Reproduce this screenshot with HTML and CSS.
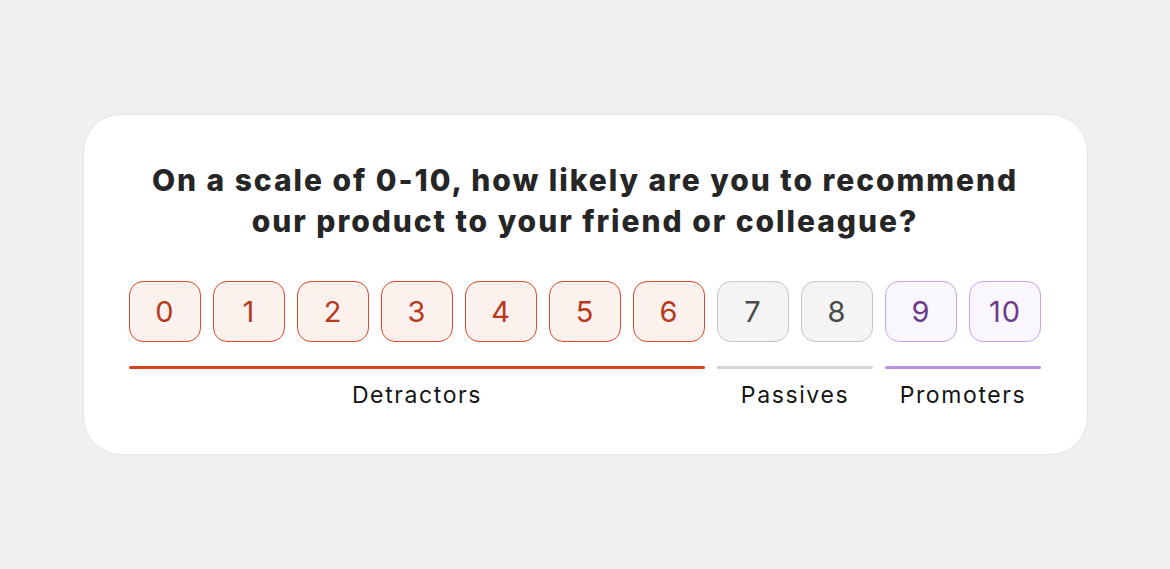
FILE: index.html
```html
<!DOCTYPE html>
<html lang="en">
<head>
<meta charset="utf-8">
<title>NPS survey</title>
<link rel="stylesheet" href="styles.css">
</head>
<body>
<main class="page">
  <section class="card">
    <h1 class="question">On a scale of 0-10, how likely are you to recommend<br>our product to your friend or colleague?</h1>
    <div class="scale">
      <div class="group detractors">
        <div class="buttons">
          <button class="score">0</button>
          <button class="score">1</button>
          <button class="score">2</button>
          <button class="score">3</button>
          <button class="score">4</button>
          <button class="score">5</button>
          <button class="score">6</button>
        </div>
        <div class="bar"></div>
        <div class="label">Detractors</div>
      </div>
      <div class="group passives">
        <div class="buttons">
          <button class="score">7</button>
          <button class="score">8</button>
        </div>
        <div class="bar"></div>
        <div class="label">Passives</div>
      </div>
      <div class="group promoters">
        <div class="buttons">
          <button class="score">9</button>
          <button class="score">10</button>
        </div>
        <div class="bar"></div>
        <div class="label">Promoters</div>
      </div>
    </div>
  </section>
</main>
</body>
</html>
```

FILE: styles.css
```css
* { box-sizing: border-box; }
html, body { margin: 0; padding: 0; }
body {
  background: #f0f0f0;
  font-family: Inter, "Noto Sans", sans-serif;
  width: 1170px;
  height: 569px;
}
.page {
  display: flex;
  justify-content: center;
  padding-top: 114px;
}
.card {
  width: 1005px;
  height: 341px;
  background: #ffffff;
  border: 1px solid #e4e4e4;
  border-radius: 38px;
  padding: 45px 45px 0 45px;
  display: flex;
  flex-direction: column;
  align-items: center;
}
.question {
  margin: 0;
  font-size: 30px;
  line-height: 41px;
  font-weight: 800;
  color: #262626;
  text-align: center;
  letter-spacing: 1.95px;
  white-space: nowrap;
}
.scale {
  display: flex;
  gap: 12px;
  margin-top: 39px;
}
.group {
  display: flex;
  flex-direction: column;
  align-items: stretch;
}
.buttons {
  display: flex;
  gap: 12px;
}
.score {
  width: 72px;
  height: 61px;
  border-radius: 14px;
  font-family: Inter, "Noto Sans", sans-serif;
  font-size: 29px;
  font-weight: 400;
  letter-spacing: 1px;
  padding: 0;
  display: flex;
  align-items: center;
  justify-content: center;
}
.bar {
  height: 3px;
  border-radius: 2px;
  margin-top: 24px;
}
.label {
  text-align: center;
  font-size: 23px;
  line-height: 28px;
  margin-top: 12px;
  color: #141414;
  letter-spacing: 1.6px;
}
.detractors .score { background: #fdf1ee; border: 1.5px solid #d8492a; color: #b7381a; }
.detractors .bar { background: #d8431f; }
.passives .score { background: #f4f4f4; border: 1.5px solid #c6c6c6; color: #4a4a4a; }
.passives .bar { background: #d4d4d4; }
.promoters .score { background: #faf6fe; border: 1.5px solid #c9a2ea; color: #6c3b8c; }
.promoters .bar { background: #bb90e6; }
```
